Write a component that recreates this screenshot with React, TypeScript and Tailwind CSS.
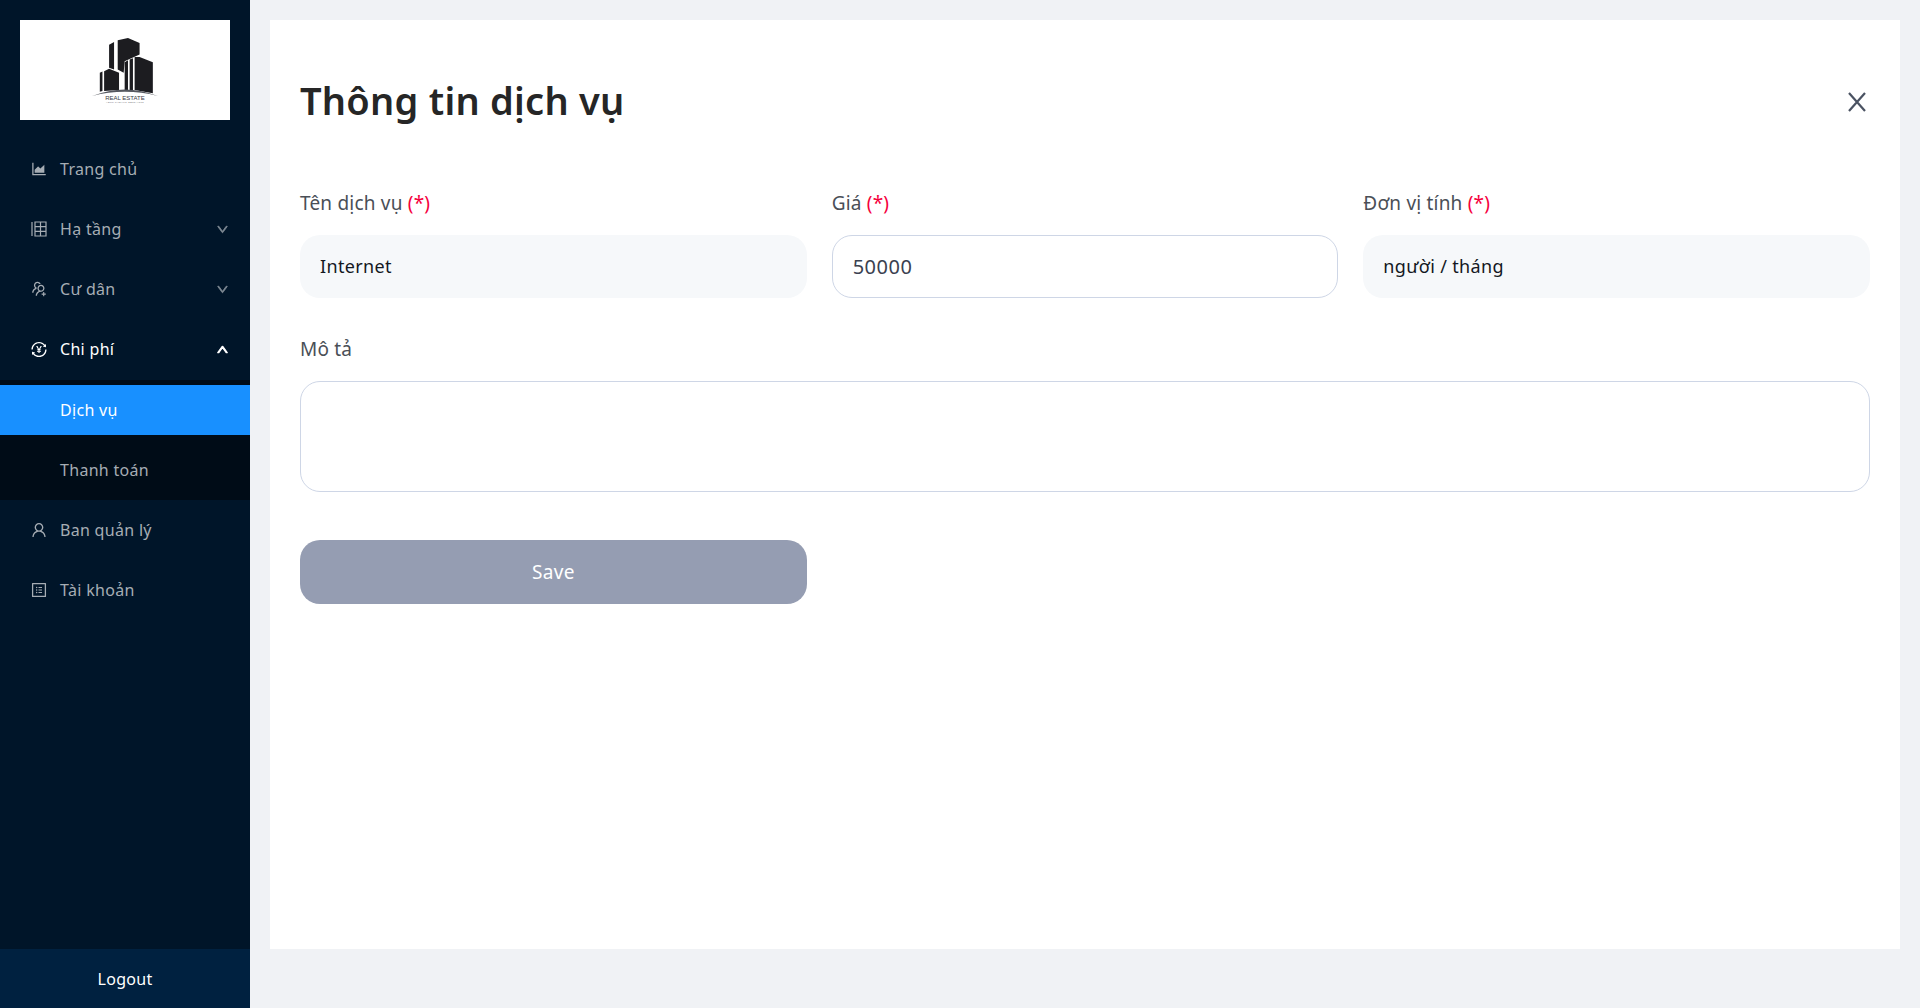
import React from "react";
import { AiOutlineAreaChart, AiOutlineUsergroupAdd, AiOutlineTransaction, AiOutlineUser, AiOutlineProfile, AiOutlineDown, AiOutlineUp } from "react-icons/ai";

const font = { fontFamily: '"Noto Sans", sans-serif' };

function Logo() {
  return (
    <div className="h-[100px] bg-white flex flex-col items-center pt-[18px]">
      <svg width="66" height="59" viewBox="97 55 198 178">
        <path d="M148 75 L163 67 V150 L148 145 Z M174 62 L205 55 L240 70 V105 L195 125 L192 160 L174 150 Z" fill="#1c1c20" />
        <path d="M195 128 L205 122 V215 H195 Z M210 120 L220 116 V216 H210 Z M225 112 L240 112 L280 128 V222 L225 212 Z" fill="#1c1c20" />
        <path d="M120 160 L128 156 V215 L120 217 Z M133 155 L148 148 L178 160 V212 L133 215 Z" fill="#1c1c20" />
        <path d="M97 230 Q195 190 295 230 Q195 205 97 230 Z" fill="#55585f" />
      </svg>
      <div className="text-[6px] leading-[6px] text-[#3a3d44] mt-[-2px]" style={{ fontFamily: '"Liberation Sans", sans-serif' }}>REAL ESTATE</div>
      <div className="text-[2.5px] leading-[3px] text-[#777a80] tracking-[0.3px]">YOUR TAGLINE GOES HERE</div>
    </div>
  );
}

function GridIcon() {
  return (
    <svg width="16" height="16" viewBox="0 0 16 16" fill="none" stroke="currentColor" strokeWidth="1.2">
      <path d="M1 1V15 M4 1H15V15H4Z M4 5.7H15 M4 10.3H15 M9.5 1V15" />
    </svg>
  );
}

function Item({ icon, label, arrow }: { icon: React.ReactNode; label: string; arrow?: boolean }) {
  return (
    <div className="h-[50px] mb-[10px] pl-[30px] pr-[20px] flex items-center text-[16px] text-[#a6adb4]">
      <span className="w-[18px] text-[20px] mr-[12px] flex items-center justify-center">{icon}</span>
      <span className="flex-1 tracking-[0.3px]">{label}</span>
      {arrow && <AiOutlineDown className="text-[13px] mr-[1px] stroke-[60px] text-[#7f8a94]" />}
    </div>
  );
}

function Label({ text, req }: { text: string; req?: boolean }) {
  return (
    <div className="h-[24px] leading-[24px] text-[19px] text-[#4a4f57] mb-[20px] tracking-[0.2px]">
      {text} {req && <span className="text-[#f5003c]">(*)</span>}
    </div>
  );
}

function Field({ label, value, filled, wide }: { label: string; value: string; filled?: boolean; wide?: boolean }) {
  return (
    <div>
      <Label text={label} req />
      <div className={"h-[63px] rounded-[20px] px-[20px] flex items-center " + (wide ? "text-[20px] tracking-[0.5px] " : "text-[18px] tracking-[0.35px] ") + (filled ? "bg-[#f6f8fa] text-[#14181f]" : "bg-white border border-[#ced6e6] text-[#3a4150]")}>
        {value}
      </div>
    </div>
  );
}

export default function App() {
  return (
    <div className="flex h-screen bg-[#f0f2f5]" style={font}>
      <aside className="w-[250px] shrink-0 bg-[#001529] flex flex-col">
        <div className="flex-1 pt-[20px]">
          <div className="mx-[20px]"><Logo /></div>
          <nav className="mt-[24px]">
            <Item icon={<AiOutlineAreaChart />} label="Trang chủ" />
            <Item icon={<GridIcon />} label="Hạ tầng" arrow />
            <Item icon={<AiOutlineUsergroupAdd />} label="Cư dân" arrow />
            <div className="h-[50px] mb-[6px] pl-[30px] pr-[20px] flex items-center text-[16px] text-white">
              <span className="w-[18px] text-[21px] mr-[12px] flex items-center justify-center"><AiOutlineTransaction /></span>
              <span className="flex-1 tracking-[0.3px]">Chi phí</span>
              <AiOutlineUp className="text-[13px] mr-[1px] stroke-[80px]" />
            </div>
            <div className="bg-[#000c17] py-[5px] mb-[5px]">
              <div className="h-[50px] mb-[10px] bg-[#1890ff] pl-[60px] flex items-center text-[16px] text-white tracking-[0.3px]">Dịch vụ</div>
              <div className="h-[50px] pl-[60px] flex items-center text-[16px] text-[#a6adb4] tracking-[0.3px]">Thanh toán</div>
            </div>
            <Item icon={<AiOutlineUser />} label="Ban quản lý" />
            <Item icon={<AiOutlineProfile />} label="Tài khoản" />
          </nav>
        </div>
        <div className="h-[59px] bg-[#002140] flex items-center justify-center text-white text-[16px] tracking-[0.3px]">Logout</div>
      </aside>
      <main className="flex-1 pt-[20px] px-[20px] pb-[59px]">
        <div className="h-full bg-white p-[30px]">
          <div className="flex items-center justify-between h-[60px] mt-[20px] mb-[61px]">
            <h1 className="text-[38px] font-semibold text-[#262626] tracking-[0.25px]">Thông tin dịch vụ</h1>
            <svg width="18" height="20" viewBox="0 0 18 20" className="mr-[4px] mt-[3px]" fill="none" stroke="#4a5262" strokeWidth="2.2">
              <path d="M1 1 L17 19 M17 1 L1 19" />
            </svg>
          </div>
          <div className="grid grid-cols-3 gap-x-[25px]">
            <Field label="Tên dịch vụ" value="Internet" filled />
            <Field label="Giá" value="50000" wide />
            <Field label="Đơn vị tính" value="người / tháng" filled />
          </div>
          <div className="mt-[39px]">
            <Label text="Mô tả" />
            <div className="h-[111px] rounded-[20px] border border-[#ced6e6] bg-white" />
          </div>
          <div className="grid grid-cols-3 gap-x-[25px] mt-[48px]">
            <button className="h-[64px] rounded-[20px] bg-[#959db2] text-white text-[19px] tracking-[0.3px]">Save</button>
          </div>
        </div>
      </main>
    </div>
  );
}
